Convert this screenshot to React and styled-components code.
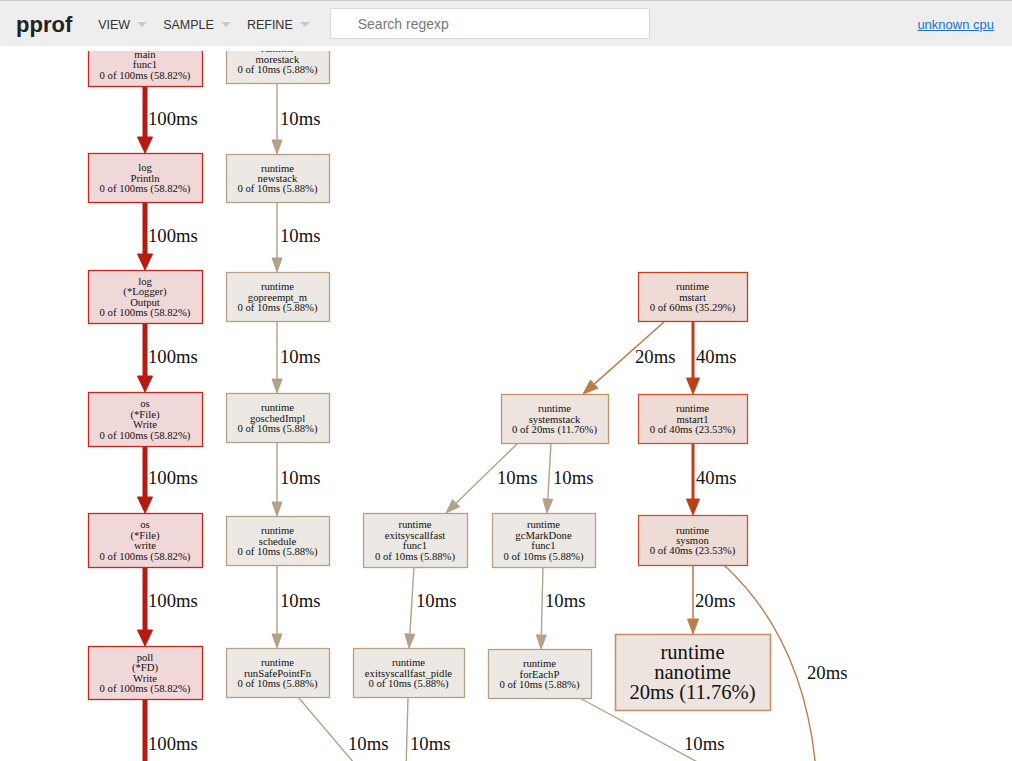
import styled, { createGlobalStyle } from "styled-components";

const GlobalStyle = createGlobalStyle`
  html, body {
    margin: 0;
    padding: 0;
    background: #fff;
    font-family: "Liberation Sans", Arial, sans-serif;
    overflow: hidden;
  }
`;

const Page = styled.div`
  width: 1012px;
  height: 761px;
  display: flex;
  flex-direction: column;
  overflow: hidden;
`;

const Header = styled.header`
  height: 45px;
  flex: none;
  display: flex;
  align-items: center;
  background: #eeeeee;
  border-top: 1px solid #c9c9c9;
  padding: 0 18px 0 16px;
  position: relative;
  z-index: 2;
`;

const Logo = styled.div`
  font-size: 22px;
  font-weight: 700;
  color: #222;
  margin: 3px 26px 0 0;
`;

const Menu = styled.div`
  display: flex;
  align-items: center;
  gap: 16px;
  font-size: 12.5px;
  color: #333;
  margin-top: 2px;
`;

const MenuItem = styled.div`
  display: flex;
  align-items: center;
  gap: 7px;
  cursor: pointer;
`;

const Caret = styled.span`
  width: 0;
  height: 0;
  border-left: 5px solid transparent;
  border-right: 5px solid transparent;
  border-top: 5px solid #c8c8c8;
`;

const Search = styled.input`
  margin-left: 20px;
  width: 320px;
  height: 31px;
  box-sizing: border-box;
  border: 1px solid #dadada;
  border-radius: 2px;
  padding: 0 0 0 27px;
  font-family: "Liberation Sans", Arial, sans-serif;
  font-size: 14px;
  color: #333;
  outline: none;
  &::placeholder {
    color: #777;
  }
`;

const CpuLink = styled.a`
  margin: 2px 0 0 auto;
  color: #1a6fd9;
  font-size: 13px;
  text-decoration: underline;
`;

const GraphArea = styled.div`
  flex: 1;
  overflow: hidden;
  background: #fff;
  padding-top: 5px;
`;

const Graph = styled.svg`
  display: block;
  overflow: hidden;
  font-family: "Liberation Serif", "Times New Roman", serif;
`;

const RED = { fill: "#f1d8d8", stroke: "#c4271d" };
const TAN = { fill: "#ece9e4", stroke: "#b5a188" };
const HOT = { fill: "#eedbd6", stroke: "#c2401c" };
const WARM = { fill: "#eddcd6", stroke: "#cc4f2b" };
const MILD = { fill: "#ede4df", stroke: "#c68f68" };

const nodes = [
  { x: 88, y: 32, w: 114, h: 54, c: RED, lines: ["main", "main", "func1", "0 of 100ms (58.82%)"] },
  { x: 88, y: 153, w: 114, h: 49, c: RED, lines: ["log", "Println", "0 of 100ms (58.82%)"] },
  { x: 88, y: 270, w: 114, h: 53, c: RED, lines: ["log", "(*Logger)", "Output", "0 of 100ms (58.82%)"] },
  { x: 88, y: 392, w: 114, h: 54, c: RED, lines: ["os", "(*File)", "Write", "0 of 100ms (58.82%)"] },
  { x: 88, y: 513, w: 114, h: 54, c: RED, lines: ["os", "(*File)", "write", "0 of 100ms (58.82%)"] },
  { x: 88, y: 646, w: 114, h: 53, c: RED, lines: ["poll", "(*FD)", "Write", "0 of 100ms (58.82%)"] },

  { x: 226, y: 34, w: 103, h: 49, c: TAN, lines: ["runtime", "morestack", "0 of 10ms (5.88%)"] },
  { x: 226, y: 154, w: 103, h: 48, c: TAN, lines: ["runtime", "newstack", "0 of 10ms (5.88%)"] },
  { x: 226, y: 272, w: 103, h: 49, c: TAN, lines: ["runtime", "gopreempt_m", "0 of 10ms (5.88%)"] },
  { x: 226, y: 393, w: 103, h: 49, c: TAN, lines: ["runtime", "goschedImpl", "0 of 10ms (5.88%)"] },
  { x: 226, y: 516, w: 103, h: 49, c: TAN, lines: ["runtime", "schedule", "0 of 10ms (5.88%)"] },
  { x: 226, y: 648, w: 103, h: 49, c: TAN, lines: ["runtime", "runSafePointFn", "0 of 10ms (5.88%)"] },

  { x: 638, y: 272, w: 109, h: 49, c: HOT, lines: ["runtime", "mstart", "0 of 60ms (35.29%)"] },
  { x: 501, y: 394, w: 107, h: 49, c: MILD, lines: ["runtime", "systemstack", "0 of 20ms (11.76%)"] },
  { x: 638, y: 394, w: 109, h: 49, c: WARM, lines: ["runtime", "mstart1", "0 of 40ms (23.53%)"] },
  { x: 363, y: 513, w: 104, h: 54, c: TAN, lines: ["runtime", "exitsyscallfast", "func1", "0 of 10ms (5.88%)"] },
  { x: 492, y: 513, w: 103, h: 54, c: TAN, lines: ["runtime", "gcMarkDone", "func1", "0 of 10ms (5.88%)"] },
  { x: 638, y: 515, w: 109, h: 50, c: WARM, lines: ["runtime", "sysmon", "0 of 40ms (23.53%)"] },
  { x: 353, y: 648, w: 111, h: 49, c: TAN, lines: ["runtime", "exitsyscallfast_pidle", "0 of 10ms (5.88%)"] },
  { x: 488, y: 649, w: 103, h: 49, c: TAN, lines: ["runtime", "forEachP", "0 of 10ms (5.88%)"] },
  { x: 615, y: 634, w: 155, h: 76, c: MILD, big: true, lines: ["runtime", "nanotime", "20ms (11.76%)"] },
];

const C_RED = "#b61a10";
const C_TAN = "#b5a189";
const C_HOT = "#bb4016";
const C_MILD = "#bd7e4e";

// x1,y1 -> tip x2,y2 ; lab = [text, x, centerY]
const edges = [
  { p: [145, 86, 145, 153], w: 5, c: C_RED, a: [16, 15], lab: ["100ms", 148, 119] },
  { p: [145, 202, 145, 270], w: 5, c: C_RED, a: [16, 15], lab: ["100ms", 148, 236] },
  { p: [145, 323, 145, 392], w: 5, c: C_RED, a: [16, 15], lab: ["100ms", 148, 357] },
  { p: [145, 446, 145, 513], w: 5, c: C_RED, a: [16, 15], lab: ["100ms", 148, 478] },
  { p: [145, 567, 145, 646], w: 5, c: C_RED, a: [16, 15], lab: ["100ms", 148, 601] },
  { p: [145, 699, 145, 780], w: 5, c: C_RED, lab: ["100ms", 148, 744] },

  { p: [277, 83, 277, 154], w: 1.4, c: C_TAN, a: [14, 10], lab: ["10ms", 280, 119] },
  { p: [277, 202, 277, 272], w: 1.4, c: C_TAN, a: [14, 10], lab: ["10ms", 280, 236] },
  { p: [277, 321, 277, 393], w: 1.4, c: C_TAN, a: [14, 10], lab: ["10ms", 280, 357] },
  { p: [277, 442, 277, 516], w: 1.4, c: C_TAN, a: [14, 10], lab: ["10ms", 280, 478] },
  { p: [277, 565, 277, 648], w: 1.4, c: C_TAN, a: [14, 10], lab: ["10ms", 280, 601] },
  { p: [298, 697, 360, 770], w: 1.4, c: C_TAN, lab: ["10ms", 348, 744] },

  { p: [664, 322, 583, 394], w: 1.6, c: C_MILD, a: [15, 11], lab: ["20ms", 635, 357] },
  { p: [693, 322, 693, 394], w: 3, c: C_HOT, a: [16, 13], lab: ["40ms", 696, 357] },
  { p: [693, 443, 693, 515], w: 3, c: C_HOT, a: [16, 13], lab: ["40ms", 696, 478] },
  { p: [518, 443, 446, 513], w: 1.4, c: C_TAN, a: [14, 10], lab: ["10ms", 497, 478] },
  { p: [551, 443, 547, 513], w: 1.4, c: C_TAN, a: [14, 10], lab: ["10ms", 553, 478] },
  { p: [414, 567, 409, 648], w: 1.4, c: C_TAN, a: [14, 10], lab: ["10ms", 416, 601] },
  { p: [543, 567, 541, 649], w: 1.4, c: C_TAN, a: [14, 10], lab: ["10ms", 545, 601] },
  { p: [408, 697, 406, 770], w: 1.4, c: C_TAN, lab: ["10ms", 410, 744] },
  { p: [578, 697, 712, 770], w: 1.4, c: C_TAN, lab: ["10ms", 684, 744] },
  { p: [693, 565, 693, 634], w: 1.6, c: C_MILD, a: [15, 11], lab: ["20ms", 695, 601] },
];

const Node = ({ n }) => {
  const fs = n.big ? 20.6 : 10.7;
  const lh = n.big ? 20.2 : 10.4;
  const cx = n.x + n.w / 2;
  const cy = n.y + n.h / 2 + 0.5;
  const k = n.lines.length;
  return (
    <g>
      <rect x={n.x + 0.5} y={n.y + 0.5} width={n.w} height={n.h} fill={n.c.fill} stroke={n.c.stroke} strokeWidth={n.big ? 1.6 : 1.3} />
      {n.lines.map((t, i) => (
        <text key={i} x={cx} y={cy + (i - (k - 1) / 2) * lh + fs * 0.33} fontSize={fs} textAnchor="middle" fill="#111">
          {t}
        </text>
      ))}
    </g>
  );
};

const Edge = ({ e }) => {
  const [x1, y1, x2, y2] = e.p;
  const dx = x2 - x1;
  const dy = y2 - y1;
  const len = Math.hypot(dx, dy);
  const ux = dx / len;
  const uy = dy / len;
  let lineEnd = [x2, y2];
  let head = null;
  if (e.a) {
    const [al, aw] = e.a;
    const bx = x2 - ux * al;
    const by = y2 - uy * al;
    lineEnd = [bx, by];
    const px = -uy * (aw / 2);
    const py = ux * (aw / 2);
    head = `${x2},${y2} ${bx + px},${by + py} ${bx - px},${by - py}`;
  }
  return (
    <g>
      <line x1={x1} y1={y1} x2={lineEnd[0]} y2={lineEnd[1]} stroke={e.c} strokeWidth={e.w} />
      {head && <polygon points={head} fill={e.c} stroke={e.c} strokeWidth="1" />}
      <text x={e.lab[1]} y={e.lab[2] + 6.3} fontSize="18.7" fill="#111">
        {e.lab[0]}
      </text>
    </g>
  );
};

export default function App() {
  return (
    <>
      <GlobalStyle />
      <Page>
        <Header>
          <Logo>pprof</Logo>
          <Menu>
            <MenuItem>VIEW <Caret /></MenuItem>
            <MenuItem>SAMPLE <Caret /></MenuItem>
            <MenuItem>REFINE <Caret /></MenuItem>
          </Menu>
          <Search placeholder="Search regexp" />
          <CpuLink href="#">unknown cpu</CpuLink>
        </Header>
        <GraphArea>
          <Graph width="1012" height="710" viewBox="0 51 1012 710">
            {edges.map((e, i) => (
              <Edge key={i} e={e} />
            ))}
            <path d="M724,565 C775,612 808,680 816,770" fill="none" stroke={C_MILD} strokeWidth="1.4" />
            <text x="807" y="679.3" fontSize="18.7" fill="#111">20ms</text>
            {nodes.map((n, i) => (
              <Node key={i} n={n} />
            ))}
          </Graph>
        </GraphArea>
      </Page>
    </>
  );
}
